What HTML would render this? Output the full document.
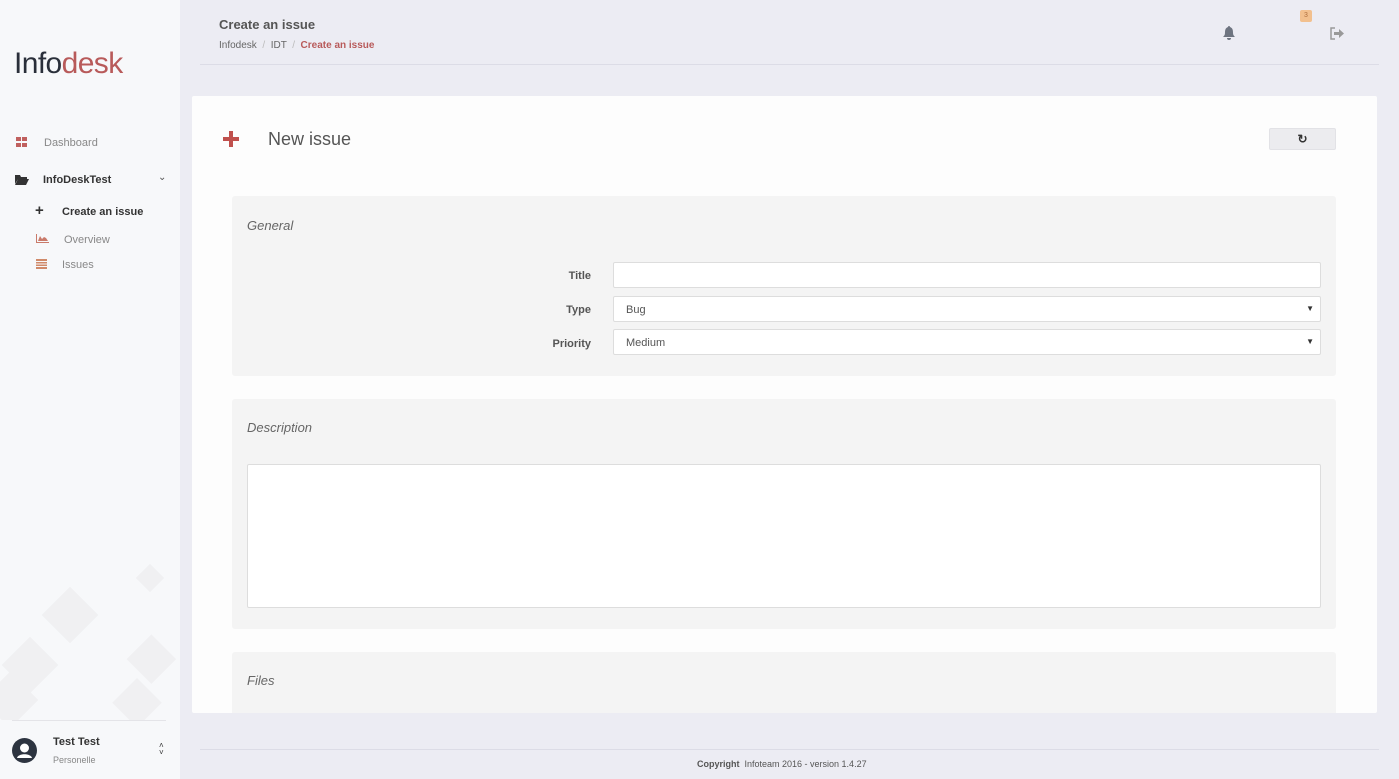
<!DOCTYPE html><html><head><style>
*{margin:0;padding:0;box-sizing:border-box}
body{width:1399px;height:779px;overflow:hidden;background:#ececf3;font-family:"Liberation Sans",sans-serif;position:relative;color:#555}
.a{position:absolute}
.sb{left:0;top:0;width:180px;height:779px;background:#f7f8fa}
.lbl{font-size:11px;font-weight:bold;color:#555;text-align:right;width:80px}
.inp{background:#fff;border:1px solid #ddd;border-radius:2px;font-size:11px;color:#555;padding:7px 12px}
.sec{background:#f4f4f4;border-radius:3px;left:232px;width:1104px}
.h{font-style:italic;font-size:13px;color:#666}
</style></head><body>
<div class="a sb">
 <svg class="a" style="left:0;top:560px" width="180" height="160"><g fill="#f0f0f2"><rect x="140" y="8" width="20" height="20" transform="rotate(45 150 18)"/><rect x="50" y="35" width="40" height="40" transform="rotate(45 70 55)"/><rect x="10" y="85" width="40" height="40" transform="rotate(45 30 105)"/><rect x="135" y="80" width="35" height="35" transform="rotate(45 150 97)"/><rect x="120" y="125" width="35" height="35" transform="rotate(45 137 142)"/><rect x="-10" y="120" width="40" height="40" transform="rotate(45 10 140)"/></g></svg>
 <div class="a" style="left:14px;top:47px;font-size:30px;letter-spacing:-0.6px;color:#2a2f3a">Info<span style="color:#b85a5a">desk</span></div>
 <div class="a" style="left:16px;top:137px;width:11px;height:10px;background:linear-gradient(90deg,#c0605e 45%,transparent 45%,transparent 55%,#c0605e 55%)"></div>
 <div class="a" style="left:16px;top:141px;width:11px;height:2px;background:#f7f8fa"></div>
 <div class="a" style="left:44px;top:137px;font-size:11px;color:#888">Dashboard</div>
 <svg class="a" style="left:15px;top:174px" width="14" height="11"><path d="M0 1h5l1 2h6v2H3L0 10z M3 5h11l-3 6H0z" fill="#333"/></svg>
 <div class="a" style="left:43px;top:174px;font-size:11px;font-weight:bold;color:#333">InfoDeskTest</div>
 <div class="a" style="left:158px;top:172px;font-size:10px;color:#555">&#8964;</div>
 <div class="a" style="left:35px;top:202px;font-size:15px;font-weight:bold;color:#333">+</div>
 <div class="a" style="left:62px;top:206px;font-size:11px;font-weight:bold;color:#333">Create an issue</div>
 <svg class="a" style="left:36px;top:234px" width="13" height="9"><path d="M0 0v9h13V8H1V0z M2 7l2-5 2 3 2-2 2 1 2 3z" fill="#c97a6a"/></svg>
 <div class="a" style="left:64px;top:234px;font-size:11px;color:#888">Overview</div>
 <svg class="a" style="left:36px;top:259px" width="11" height="10"><g fill="#d08a6a"><rect width="11" height="2"/><rect y="3" width="11" height="1.5"/><rect y="5.5" width="11" height="1.5"/><rect y="8" width="11" height="2"/></g></svg>
 <div class="a" style="left:62px;top:259px;font-size:11px;color:#888">Issues</div>
 <div class="a" style="left:12px;top:720px;width:154px;height:1px;background:#e4e4e8"></div>
 <svg class="a" style="left:12px;top:738px" width="25" height="25"><circle cx="12.5" cy="12.5" r="12.5" fill="#2d3440"/><circle cx="12.5" cy="10" r="4.5" fill="#fff"/><path d="M5 20c1-5 14-5 15 0z" fill="#fff"/></svg>
 <div class="a" style="left:53px;top:736px;font-size:11px;font-weight:bold;color:#333">Test Test</div>
 <div class="a" style="left:53px;top:755px;font-size:9px;color:#888">Personelle</div>
 <div class="a" style="left:159px;top:742px;font-size:8px;line-height:7px;color:#333">&#708;<br>&#709;</div>
</div>
<div class="a" style="left:219px;top:17px;font-size:13px;font-weight:bold;color:#555">Create an issue</div>
<div class="a" style="left:219px;top:40px;font-size:10px;color:#666">Infodesk <span style="color:#bbb">&nbsp;/&nbsp;</span> IDT <span style="color:#bbb">&nbsp;/&nbsp;</span> <b style="color:#b85a5a">Create an issue</b></div>
<div class="a" style="left:200px;top:64px;width:1179px;height:1px;background:#dcdce6"></div>
<svg class="a" style="left:1222px;top:26px" width="14" height="14"><path d="M7 0c-1 0-1 1-1 1C3 2 3 5 3 7c0 2-1 3-2 4h12c-1-1-2-2-2-4 0-2 0-5-3-6 0 0 0-1-1-1zM5 12a2 2 0 004 0z" fill="#6e7480"/></svg>
<div class="a" style="left:1300px;top:10px;width:12px;height:12px;background:#f2c08e;border-radius:2px;font-size:7px;color:#b07040;text-align:center;line-height:12px">3</div>
<svg class="a" style="left:1330px;top:27px" width="15" height="13"><path d="M5 1H1v11h4" stroke="#999" stroke-width="1.5" fill="none"/><path d="M4 5h5V2l5 4.5-5 4.5V8H4z" fill="#999"/></svg>
<div class="a" style="left:192px;top:96px;width:1185px;height:617px;background:#fdfdfd;border-radius:2px"></div>
<svg class="a" style="left:223px;top:131px" width="16" height="16"><path d="M6 0h4v6h6v4h-6v6H6v-6H0V6h6z" fill="#c0504d"/></svg>
<div class="a" style="left:268px;top:129px;font-size:18px;color:#555">New issue</div>
<div class="a" style="left:1269px;top:128px;width:67px;height:22px;background:#ececef;border:1px solid #e2e2e6;border-radius:2px;text-align:center;font-size:12px;line-height:20px;color:#333;font-weight:bold">&#8635;</div>
<div class="a sec" style="top:196px;height:180px"></div>
<div class="a h" style="left:247px;top:218px">General</div>
<div class="a lbl" style="left:511px;top:270px">Title</div>
<div class="a inp" style="left:613px;top:262px;width:708px;height:26px"></div>
<div class="a lbl" style="left:511px;top:304px">Type</div>
<div class="a inp" style="left:613px;top:296px;width:708px;height:26px">Bug<span style="float:right;font-size:8px;color:#333;margin-right:-6px">&#9660;</span></div>
<div class="a lbl" style="left:511px;top:338px">Priority</div>
<div class="a inp" style="left:613px;top:329px;width:708px;height:26px">Medium<span style="float:right;font-size:8px;color:#333;margin-right:-6px">&#9660;</span></div>
<div class="a sec" style="top:399px;height:230px"></div>
<div class="a h" style="left:247px;top:420px">Description</div>
<div class="a inp" style="left:247px;top:464px;width:1074px;height:144px"></div>
<div class="a sec" style="top:652px;height:61px;border-radius:3px 3px 0 0"></div>
<div class="a h" style="left:247px;top:673px">Files</div>
<div class="a" style="left:200px;top:749px;width:1179px;height:1px;background:#dcdce6"></div>
<div class="a" style="left:697px;top:759px;font-size:9px;color:#555"><b>Copyright</b>&nbsp; Infoteam 2016 - version 1.4.27</div>
</body></html>
